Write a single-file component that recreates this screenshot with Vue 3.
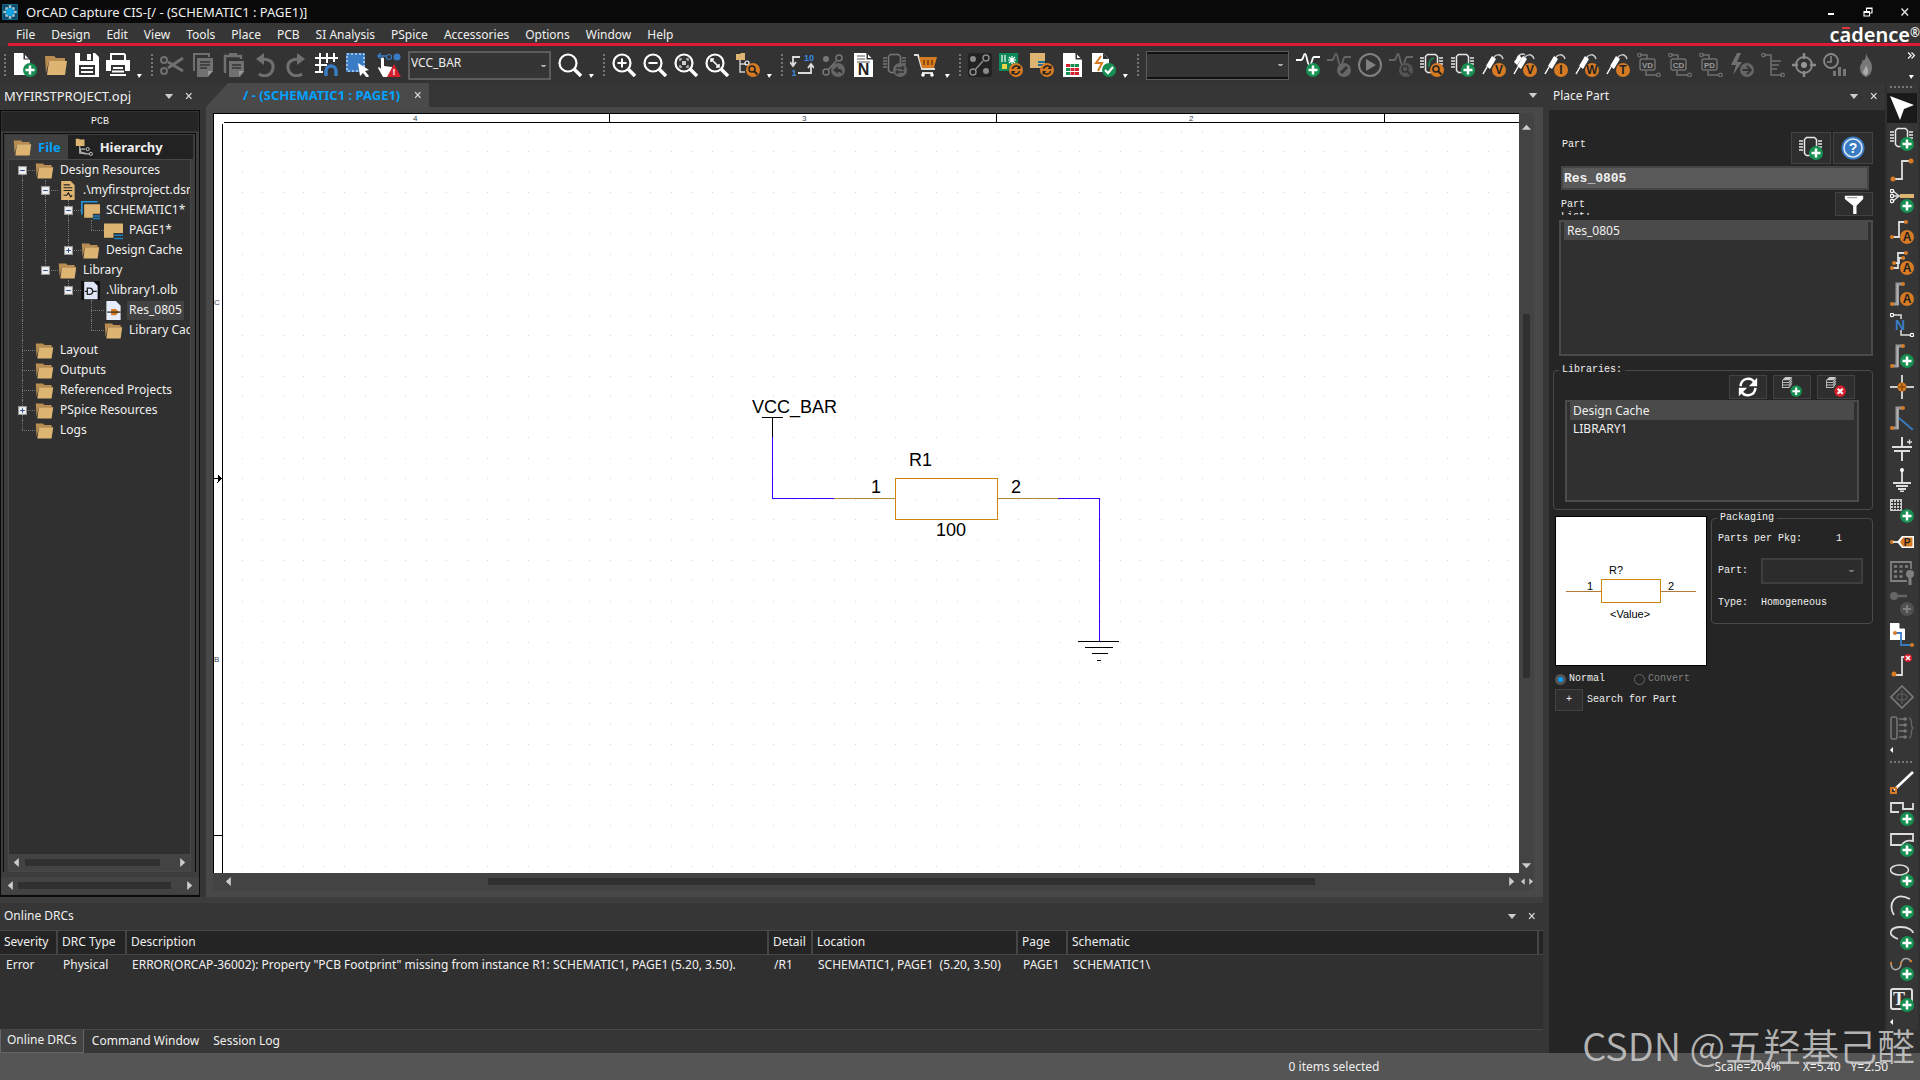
<template>
  <div class="app">
    <header class="title-bar">
      <Icon name="app" class="app-icon" />
      <h1>OrCAD Capture CIS-[/ - (SCHEMATIC1 : PAGE1)]</h1>
      <div class="window-buttons">
        <button aria-label="Minimize"><Icon name="minimize" /></button>
        <button aria-label="Restore"><Icon name="restore" /></button>
        <button aria-label="Close"><Icon name="close" /></button>
      </div>
    </header>

    <nav class="menu-bar">
      <button v-for="item in menus" :key="item">{{ item }}</button>
      <div class="brand">c<span class="macron">a</span>dence<small>®</small></div>
    </nav>

    <div class="toolbar">
      <div v-for="(group, i) in toolGroups" :key="i" class="tool-group">
        <span class="grip"></span>
        <template v-for="(tool, j) in group" :key="j">
          <select v-if="tool.select !== undefined" class="tool-select" :class="{ blank: !tool.select }" aria-label="Name">
            <option>{{ tool.select }}</option>
          </select>
          <span v-else-if="tool === '|'" class="more"></span>
          <button v-else class="tool" :aria-label="tool"><Icon :name="tool" /></button>
        </template>
      </div>
      <button class="overflow" aria-label="More tools">
        <Icon name="chevrons" />
        <span class="more"></span>
      </button>
    </div>

    <main class="main">
      <div class="workspace">
        <div class="upper">
          <aside class="project">
            <div class="dock-title">
              <span>MYFIRSTPROJECT.opj</span>
              <button aria-label="Panel menu"><Icon name="caret" /></button>
              <button aria-label="Close panel"><Icon name="close" /></button>
            </div>
            <div class="project-frame">
              <div class="project-type">PCB</div>
              <div class="project-inner">
                <div class="project-tabs">
                  <button class="active"><Icon name="folder" />File</button>
                  <button><Icon name="hierarchy" />Hierarchy</button>
                </div>
                <div class="tree-box">
                  <ul class="tree">
                    <li v-for="node in tree" :key="node.label" class="node">
                      <span v-for="(g, k) in node.guides" :key="k" class="guide" :class="guideClass[g]">
                        <button v-if="k === node.guides.length - 1 && node.toggle" class="toggle" :aria-label="'Toggle ' + node.label">
                          <Icon :name="node.toggle" />
                        </button>
                      </span>
                      <Icon :name="node.icon" class="node-icon" />
                      <span class="node-label" :class="{ selected: node.selected }">{{ node.label }}</span>
                    </li>
                  </ul>
                  <div class="scroll-x">
                    <Icon name="left" />
                    <div class="track"><div class="thumb" :style="{ marginLeft: '2%', width: '87%' }"></div></div>
                    <Icon name="right" />
                  </div>
                </div>
              </div>
              <div class="scroll-x outer">
                <Icon name="left" />
                <div class="track"><div class="thumb" :style="{ marginLeft: '1%', width: '91%' }"></div></div>
                <Icon name="right" />
              </div>
            </div>
          </aside>

          <section class="editor">
            <div class="editor-tabs">
              <button class="editor-tab">/ - (SCHEMATIC1 : PAGE1)<Icon name="close" /></button>
              <button class="tab-list" aria-label="Open pages"><Icon name="caret" /></button>
            </div>
            <div class="editor-frame">
              <div class="sheet">
                <svg class="drawing" width="100%" height="100%">
                  <path :d="gridDots" stroke="#b9e2f5" shape-rendering="crispEdges" />
                  <g stroke="#000" fill="none" shape-rendering="crispEdges">
                    <path d="M10 8.5H1400M8.5 10V900M395.5 0V8M782.5 0V8M1170.5 0V8M0 721.5H8M0 364.5H8" />
                    <path d="M4 361.5l4 3-4 3z" fill="#000" />
                  </g>
                  <g class="zone">
                    <text x="199" y="7">4</text>
                    <text x="588" y="7">3</text>
                    <text x="975" y="7">2</text>
                    <text x="0" y="191">C</text>
                    <text x="0" y="548">B</text>
                  </g>
                  <g fill="none" shape-rendering="crispEdges">
                    <path d="M548 303.5h21M558.5 303v20M864 527.5h41M871 533.5h28M878 539.5h16M883 546.5h4" stroke="#000" />
                    <path d="M558.5 323V384.5H620M844 384.5h41.500V527" stroke="#3c00ff" />
                    <path d="M620 384.500h61M783 384.500h61" stroke="#b08a35" />
                    <rect x="681.5" y="364.5" width="102" height="41" stroke="#cf850c" />
                  </g>
                  <g class="part-text">
                    <text x="538" y="299">VCC_BAR</text>
                    <text x="695" y="352">R1</text>
                    <text x="657" y="379">1</text>
                    <text x="797" y="379">2</text>
                    <text x="722" y="422">100</text>
                  </g>
                </svg>
              </div>
              <div class="scroll-y">
                <Icon name="up" />
                <div class="track"><div class="thumb" :style="{ marginTop: '181px', height: '50%' }"></div></div>
                <Icon name="down" />
              </div>
              <div class="scroll-x wide">
                <Icon name="left" />
                <div class="track"><div class="thumb" :style="{ marginLeft: '20%', width: '65%' }"></div></div>
                <Icon name="right" />
              </div>
              <div class="splitter"><Icon name="left" /><Icon name="right" /></div>
            </div>
          </section>
        </div>

        <section class="drc">
          <div class="dock-title">
            <span>Online DRCs</span>
            <button aria-label="Panel menu"><Icon name="caret" /></button>
            <button aria-label="Close panel"><Icon name="close" /></button>
          </div>
          <div class="drc-body">
            <table>
              <colgroup>
                <col v-for="(c, i) in columns" :key="i" :style="{ width: c.width }" />
              </colgroup>
              <thead>
                <tr>
                  <th v-for="(c, i) in columns" :key="i">{{ c.label }}</th>
                </tr>
              </thead>
              <tbody>
                <tr>
                  <td v-for="(cell, i) in drcRow" :key="i">{{ cell }}</td>
                </tr>
              </tbody>
            </table>
          </div>
          <div class="drc-tabs">
            <button class="active">Online DRCs</button>
            <button>Command Window</button>
            <button>Session Log</button>
          </div>
        </section>
      </div>

      <aside class="place-part">
        <div class="dock-title">
          <span>Place Part</span>
          <button aria-label="Panel menu"><Icon name="caret" /></button>
          <button aria-label="Close panel"><Icon name="close" /></button>
        </div>
        <div class="place-body">
          <div class="row part-head">
            <label for="part-name">Part</label>
            <button class="btn big" aria-label="Place part"><Icon name="partAdd" /></button>
            <button class="btn big" aria-label="Help"><Icon name="help" /></button>
          </div>
          <input id="part-name" v-model="partName" class="part-input" type="text" />
          <div class="row part-filter">
            <span class="clipped">Part List:</span>
            <button class="btn" aria-label="Filter"><Icon name="filter" /></button>
          </div>
          <ul class="list parts">
            <li class="selected">Res_0805</li>
          </ul>
          <fieldset class="libraries">
            <legend>Libraries:</legend>
            <div class="row lib-buttons">
              <button class="btn" aria-label="Refresh"><Icon name="refresh" /></button>
              <button class="btn" aria-label="Add library"><Icon name="libAdd" /></button>
              <button class="btn" aria-label="Remove library"><Icon name="libRemove" /></button>
            </div>
            <ul class="list libs">
              <li class="selected">Design Cache</li>
              <li>LIBRARY1</li>
            </ul>
          </fieldset>
          <div class="row preview-row">
            <svg class="preview" viewBox="0 0 150 148">
              <g fill="none" shape-rendering="crispEdges">
                <path d="M10 74.500h35M105 74.500h35" stroke="#b5793a" />
                <rect x="45.500" y="62.500" width="59" height="23" stroke="#cf850c" />
              </g>
              <text x="53" y="57">R?</text>
              <text x="31" y="73">1</text>
              <text x="112" y="73">2</text>
              <text x="54" y="101">&lt;Value&gt;</text>
            </svg>
            <fieldset class="packaging">
              <legend>Packaging</legend>
              <div class="pack-grid">
                <span>Parts per Pkg:</span><span class="pkg-count">1</span>
                <label for="pack-part">Part:</label>
                <select id="pack-part"><option></option></select>
                <span>Type:</span><span>Homogeneous</span>
              </div>
            </fieldset>
          </div>
          <div class="row radios">
            <label><input v-model="view" type="radio" name="view" value="normal" />Normal</label>
            <label class="off"><input v-model="view" type="radio" name="view" value="convert" disabled />Convert</label>
          </div>
          <div class="row search">
            <button id="search-toggle" class="btn small">+</button>
            <label for="search-toggle">Search for Part</label>
          </div>
        </div>
      </aside>

      <div class="side-tools">
        <div v-for="(group, i) in sideGroups" :key="i" class="side-group">
          <span class="grip-x"></span>
          <button v-for="name in group" :key="name" class="tool" :class="{ pressed: name === 'pointer' }" :aria-label="name">
            <Icon :name="name" />
          </button>
          <span class="more-left"></span>
        </div>
      </div>
    </main>

    <footer class="status-bar">
      <span class="selection">0 items selected</span>
      <span class="scale">Scale=204%</span>
      <span class="coord">X=5.40</span>
      <span class="coord">Y=2.50</span>
    </footer>
    <div class="watermark">CSDN @五羟基己醛</div>
  </div>
</template>

<script setup>
import { h, ref } from 'vue'

const partName = ref('Res_0805')
const view = ref('normal')

const menus = ['File', 'Design', 'Edit', 'View', 'Tools', 'Place', 'PCB', 'SI Analysis', 'PSpice', 'Accessories', 'Options', 'Window', 'Help']

// '|' is the drop-down mark at the end of a group
const toolGroups = [
  ['newFile', 'folderOpen', 'save', 'print', '|'],
  ['cut', 'copy', 'paste', 'undo', 'redo', 'grid', 'select', 'drag', { select: 'VCC_BAR' }, 'search', '|'],
  ['zoomIn', 'zoomOut', 'zoomArea', 'zoomFit', 'findTree', '|'],
  ['annotate', 'backAnnotate', 'netlist', 'crossRef', 'cart', '|'],
  ['board', 'syncBoard', 'syncPage', 'report', 'drcCheck', '|'],
  [{ select: '' }, 'simNew', 'simEdit', 'run', 'simView', 'partSearch', 'partAdd', 'probeV', 'probeVV', 'probeI', 'probeW', 'probeT',
    'biasVD', 'biasCD', 'biasPD', 'boltNext', 'netEdit', 'target', 'timing', 'flame']
]

const sideGroups = [
  ['pointer', 'partAdd', 'wire', 'netGroup', 'autoWire', 'autoMulti', 'autoBus', 'netAlias', 'busAdd', 'junction', 'busEntry', 'power', 'ground',
    'hierBlock', 'port', 'pinGrid', 'pinAdd', 'offPage', 'noConnect', 'diamond', 'busPins'],
  ['line', 'polyline', 'rectangle', 'ellipse', 'arc', 'ellipticArc', 'bezier', 'text']
]

const guideClass = { '|': 'v', T: 'v h', L: 'top h', F: 'bottom h', ' ': '' }

const tree = [
  { label: 'Design Resources', guides: 'F', toggle: 'minus', icon: 'folder' },
  { label: '.\\myfirstproject.dsn', guides: '|T', toggle: 'minus', icon: 'dsn' },
  { label: 'SCHEMATIC1*', guides: '||T', toggle: 'minus', icon: 'schematic' },
  { label: 'PAGE1*', guides: '|||L', icon: 'page' },
  { label: 'Design Cache', guides: '||L', toggle: 'plus', icon: 'folder' },
  { label: 'Library', guides: '|L', toggle: 'minus', icon: 'folder' },
  { label: '.\\library1.olb', guides: '| L', toggle: 'minus', icon: 'olb' },
  { label: 'Res_0805', guides: '|  T', icon: 'resPart', selected: true },
  { label: 'Library Cache', guides: '|  L', icon: 'folder' },
  { label: 'Layout', guides: 'T', icon: 'folder' },
  { label: 'Outputs', guides: 'T', icon: 'folder' },
  { label: 'Referenced Projects', guides: 'T', icon: 'folder' },
  { label: 'PSpice Resources', guides: 'T', toggle: 'plus', icon: 'folder' },
  { label: 'Logs', guides: 'L', icon: 'folder' }
].map(n => ({ ...n, guides: n.guides.split('') }))

const columns = [
  { label: 'Severity', width: '57px' },
  { label: 'DRC Type', width: '69px' },
  { label: 'Description', width: '642px' },
  { label: 'Detail', width: '44px' },
  { label: 'Location', width: '205px' },
  { label: 'Page', width: '50px' },
  { label: 'Schematic', width: 'auto' },
  { label: '', width: '5px' }
]
const drcRow = ['Error', 'Physical', 'ERROR(ORCAP-36002): Property "PCB Footprint" missing from instance R1: SCHEMATIC1, PAGE1 (5.20, 3.50).',
  '/R1', 'SCHEMATIC1, PAGE1  (5.20, 3.50)', 'PAGE1', 'SCHEMATIC1\\', '']

// grid points of the sheet, snapped to whole pixels
const pitch = 20.42
let gridDots = ''
for (let r = 0; r < 37; r++) {
  for (let c = 0; c < 63; c++) {
    gridDots += `M${Math.round(28 + c * pitch)} ${Math.round(17 + r * pitch)}.5h1`
  }
}

const GREEN = '#178f52'
const ORANGE = '#d67a24'
const BLUE = '#3a7cc4'
const TAN = '#deb473'
const GRAY = '#707070'
const RED = '#d3202c'

const line = (d, color = '#fff', w = 1.5) => `<path d="${d}" fill="none" stroke="${color}" stroke-width="${w}"/>`
const fill = (d, color = '#fff') => `<path d="${d}" fill="${color}"/>`
const dot = (x, y, r, color) => `<circle cx="${x}" cy="${y}" r="${r}" fill="${color}"/>`
const ring = (x, y, r, color = '#fff', w = 1.2) => `<circle cx="${x}" cy="${y}" r="${r}" fill="none" stroke="${color}" stroke-width="${w}"/>`
const badge = (color, inner = '') => dot(17, 17, 7, color) + inner
const plusBadge = badge(GREEN, line('M17 12.500v9M12.500 17h9', '#fff', 2.500))
const lens = (c, x = 16, y = 16) => ring(x, y, 3, c, 1.5) + line(`M${x + 2} ${y + 2}l3.500 3.500`, c, 2)
const letter = (t, x = 17, y = 21, size = 12, color = '#222') =>
  `<text x="${x}" y="${y}" text-anchor="middle" font-family="Liberation Sans, sans-serif" font-weight="700" font-size="${size}" fill="${color}">${t}</text>`
const sync = line('M13.500 16a3.700 3.700 0 0 1 7-1M20.500 18a3.700 3.700 0 0 1-7 1', '#222', 1.500) + fill('M21.500 12v4h-4zM12.500 22v-4h4z', '#222')

const chip = (c = '#e8e8e8') => line('M7.500 1.500h8l2 2v14l-2 2h-8l-2-2v-14z', c, 1.500) + line('M0 5h4M0 8h4M0 11h4M0 14h4M19 5h4M19 8h4M19 11h4', c, 1.500)
const glass = inner => ring(10, 10, 8.5, '#fff', 2.200) + line('M16 16l7 7', '#fff', 3.500) + inner
const sheet = (c = '#fff') => fill('M2 0h12l7 7v17H2z', c) + fill('M14.500 0v6.500H21z', '#333') + fill('M16 1.500v3.500h3.500z', c)
const probe = t => line('M11 6c2-5 8-6 10 0', '#ccc', 1.500) + fill('M10 3l4 3-6 10-4-3z') + line('M5 14l-4 7', '#fff', 1.500) + (t ? badge(ORANGE, letter(t)) : '')
const bias = t => line('M3 2h7v4M9 18v4h11', GRAY) + ring(2.500, 2, 1.800, GRAY) + ring(21.500, 22, 1.800, GRAY) +
  `<rect x="3" y="6" width="15" height="11" rx="2" fill="none" stroke="${GRAY}" stroke-width="1.500"/>` + letter(t, 10.5, 14.5, 8, '#999')
const busBody = line('M2 22h5V2h6', '#999', 3) + line('M8 3v20', '#ccc', 1) + dot(13, 2, 2, ORANGE) + dot(2, 22, 2, ORANGE)
const wave = c => line('M0 7h5c3 0 2-6 4-6s2 11 4.500 11S16 4 18 4h6', c, 1.800)
const folder = fill('M1 3h9l2 2h9v3H5L2 20z', '#b98d52') + fill('M5 8h18l-2 14H3z', TAN)
const nodes = c => dot(5, 6, 3, c) + ring(18, 5, 3, c, 1.500) + ring(5, 19, 3, c, 1.500) + dot(18, 18, 3, c) + line('M7 17l8-9', c)
const books = fill('M4 0h8l-3 4H0z', '#ccc') + line('M0 6.500h8.500l3.500-5M0 9.500h8.500l3.500-5M0 12.500h8.500l3.500-5M.500 4v9', '#bbb', 1.300)

const icons = {
  app: `<rect width="24" height="24" rx="2" fill="#0b4766"/>` + line('M1 1h22v22H1z', '#1b7fa8', 1) + fill('M5 5h4v4H5zM15 5h4v4h-4zM5 15h4v4H5zM15 15h4v4h-4zM10 2h4v4h-4zM10 18h4v4h-4zM2 10h4v4H2zM18 10h4v4h-4z', '#a9c4d0') + dot(12, 12, 6, '#12a5e0'),
  minimize: fill('M6 14h12v4H6z'),
  restore: line('M4 11h11v9H4zM4 13h11M9 10V4h11v10h-4M9 5h11', '#fff', 2.200),
  close: line('M5 5l13 14M18 5L5 19', '#ddd', 3),
  caret: fill('M2 7h20L12 19z', '#ccc'),
  left: fill('M17 2v20L6 12z', '#ccc'),
  right: fill('M7 2v20l11-10z', '#ccc'),
  up: fill('M2 17h20L12 6z', '#ccc'),
  down: fill('M2 7h20L12 18z', '#ccc'),
  chevrons: line('M3 4l8 8-8 8M12 4l8 8-8 8', '#fff', 3),
  minus: fill('M0 0h24v24H0z', '#999') + fill('M3 3h18v18H3z', '#f4f4f4') + line('M6 12h12', '#31508f', 3),
  plus: fill('M0 0h24v24H0z', '#999') + fill('M3 3h18v18H3z', '#f4f4f4') + line('M6 12h12M12 6v12', '#31508f', 3),
  folder,
  folderOpen: folder,
  hierarchy: fill('M1 1h4l1 1h6v8H1z', TAN) + line('M6 10v9h7M6 14h7', '#bbb') + ring(16, 14, 2, '#ccc') + ring(20, 20, 2, '#ccc') + line('M6 14c1 5 3 6 12 6', '#bbb'),
  dsn: fill('M4 0h12l5 5v19H4z', TAN) + line('M7 5h8M7 8.500h11M7 12h11M7 18h4l2-3 3 5 2-2', '#222', 1.500),
  schematic: line('M1 17V1h20', '#2394e0', 2) + fill('M4 4h20v12h-9v5H4z', TAN) + line('M15 19h9M15 22h9', '#1d7fc0', 2),
  page: fill('M0 3h24v12H12v6H0z', TAN) + line('M13 18h11M13 22h11', '#1d7fc0', 2),
  olb: fill('M0 0h24v24H0z', '#111') + fill('M4 1h12l5 5v17H4z', '#dfe6f7') + line('M8 9v8h3c5 0 5-8 0-8zM5 13h3M15 13h5', '#222', 1.600),
  resPart: fill('M3 0h12l6 6v18H3z', '#e6ecfb') + fill('M9 10h6l4 4-4 4H9z', ORANGE) + line('M4 14h17', '#222', 1.500),

  newFile: fill('M1 0h9l7 7v15H1z') + fill('M10.500 0v6.500H17z', '#333') + fill('M12 2v3.500h3.500z') + plusBadge,
  save: fill('M0 0h20l4 4v20H0z') + fill('M5 0h13v8H5zM4 12h16v10H4z', '#333') + fill('M12 1h4v6h-4z') + line('M6 15h12M6 19h12', '#fff', 2),
  print: line('M5 8V1h13l1 1v6', '#fff', 2) + fill('M0 7h24v11H0z') + fill('M5 12h14v11H5z', '#333') + line('M4 22h16M7 15h10M6 18.500h12', '#fff', 1.800),
  cut: line('M8 9l15 9M8 15l15-10', GRAY, 3) + ring(4, 7, 3, GRAY, 2) + ring(4, 18, 3, GRAY, 2),
  copy: line('M3 18V1h15v3', GRAY, 2) + fill('M6 5h16v13l-5 6H6z', GRAY) + line('M9 9h10M9 12h10M9 15h7', '#333', 1.300) + fill('M17 23v-5h5z', '#999'),
  paste: line('M3 20V3h16v3', GRAY, 2.500) + fill('M7 0h8v4H7z', GRAY) + fill('M7 8h15v11l-4 5H7z', GRAY) + line('M10 12h9M10 15h9', '#333', 1.300) + fill('M17 23v-5h5z', '#999'),
  undo: line('M6 21c6 4 13 1 14-6s-5-9-11-9', GRAY, 3) + fill('M11 0v12L3 6z', GRAY),
  redo: line('M18 21c-6 4-13 1-14-6s5-9 11-9', GRAY, 3) + fill('M13 0v12l8-6z', GRAY),
  grid: line('M5 0v20M12 0v10M19 0v9M0 5h23M0 12h12M0 19h8', '#fff', 2) + line('M11 23v-5a5 5 0 0 1 10 0v5', BLUE, 3.500),
  select: fill('M0 0h19v19H0z', BLUE) + `<rect x="1" y="1" width="17" height="17" fill="none" stroke="#fff" stroke-dasharray="2 2"/>` + fill('M12 10l11 7-4 1 4 5-2 2-4-5-3 3z'),
  drag: line('M1 3h9M4 0L1 3l3 3', BLUE, 1.500) + dot(20, 4, 3.500, BLUE) + ring(12, 4, 2.500, BLUE) + fill('M4 6c0-2 3-2 3 0v7l8 1v5l-3 5H6l-5-9c0-1 2-1 3 1z') + fill('M17 11l7 13H10z', RED) + letter('!', 17, 22, 9, '#fff'),
  search: glass(''),
  zoomIn: glass(line('M10 5.500v9M5.500 10h9', '#fff', 2)),
  zoomOut: glass(line('M5.500 10h9', '#fff', 2)),
  zoomArea: glass(line('M6 8V6h2M12 6h2v2M14 12v2h-2M8 14H6v-2', '#bbb', 1.500) + fill('M8 8h4v4H8z', '#ccc')),
  zoomFit: glass(line('M6.500 6.500l7 7M6 9V6h3M14 11v3h-3', '#fff', 1.500)),
  findTree: fill('M0 1h4l1-1h4v7H0z', TAN) + line('M4 7v12h5M4 11h5', '#ccc') + ring(11, 10, 2) + badge(ORANGE, lens('#222')),
  annotate: line('M10 4H3v8M0 9l3 4 3-4M8 20h13v-8M18 15l3-4 3 4', '#ddd', 1.800) + letter('10', 19, 8, 9, '#3a8ae0') + letter('1', 4, 23, 9, '#3a8ae0'),
  backAnnotate: nodes('#777') + badge('#666', fill('M12 17l5-4v3c4 0 5 2 4 5-1-2-2-2-4-2v2z', '#333')),
  netlist: sheet() + line('M5 3h8M5 6h8M5 9h13', '#555', 1) + letter('N', 11.500, 22, 16, '#222'),
  crossRef: chip('#777') + badge('#666', line('M13 15h8M19 13l2 2-2 2M21 19h-8M15 17l-2 2 2 2', '#333', 1.300)),
  cart: line('M0 2h4l4 14h13M8 20h11', '#ddd', 1.800) + fill('M5 4h18l-3 11H8z', ORANGE) + line('M10 7v5M14 7v5M18 7v5', '#7a3b00', 1.500) + dot(9, 22, 1.800, '#fff') + dot(18, 22, 1.800, '#fff'),
  board: `<rect width="24" height="24" rx="3" fill="#222"/>` + nodes('#8a8a8a'),
  syncBoard: fill('M0 0h19v18H0z', '#0c8a5a') + line('M3 2v7M6 2v7', '#fff', 1.200) + line('M13 3v8M9 7h8M10 4l6 6M16 4l-6 6', '#fff', 1.200) + fill('M3 11h5v5H3z', '#e8d44a') + badge(ORANGE, sync),
  syncPage: fill('M0 0h15v15H0z', TAN) + line('M8 9h7M8 12h6', '#1d6f9a', 2) + badge(ORANGE, sync),
  report: sheet() + fill('M5 11h4v3H5zM14 15h4v3h-4zM9.500 19h4v3h-4z', RED) + fill('M9.500 11h4v3h-4zM14 11h4v3h-4zM5 15h4v3H5zM5 19h4v3H5z', GREEN) + fill('M14 19h4v3h-4zM9.500 15h4v3h-4z', RED),
  drcCheck: fill('M0 0h11l6 6v13H0z') + fill('M11 0v6h6z', '#333') + line('M9 3l-5 7h6l-4 8', ORANGE, 2) + badge(GREEN, line('M13 17l3 3 5-6', '#fff', 2.200)),
  simNew: wave('#fff') + plusBadge,
  simEdit: wave('#666') + badge('#666', line('M14 20l6-6', '#333', 3)),
  run: ring(12, 12, 11, '#808080', 2) + fill('M8 6l10 6-10 6z', '#808080'),
  simView: wave('#666') + badge('#555', lens('#333')),
  partSearch: chip() + line('M9 14c0-6 1-8 5-9', GREEN, 1.500) + badge(ORANGE, lens('#222')),
  partAdd: chip() + plusBadge,
  probeV: probe('V'),
  probeVV: line('M4 5c2-4 6-5 8-3', '#ccc') + fill('M6 2l3 3-5 7-3-3z') + probe('V'),
  probeI: probe('I'),
  probeW: probe('W'),
  probeT: probe('T'),
  biasVD: bias('VD'),
  biasCD: bias('CD'),
  biasPD: bias('PD'),
  boltNext: fill('M7 0L1 12h5L3 22l9-13H7l4-9z', GRAY) + badge('#666', line('M12.500 17h8M17 13l4 4-4 4', '#333', 1.800)),
  netEdit: line('M3 2h7v20h11M10 8h10M10 12h8M10 16h6', GRAY) + ring(2.500, 2, 1.800, GRAY) + ring(21.500, 22, 1.800, GRAY),
  target: ring(12, 12, 8, '#8a8a8a', 2) + dot(12, 12, 3, '#999') + line('M12 0v6M12 18v6M0 12h6M18 12h6', '#8a8a8a', 2.500),
  timing: ring(8, 8, 7, '#888', 1.800) + line('M8 3v6H4', '#888', 1.500) + fill('M10 18h3v5h-3zM15 14h3v9h-3zM20 16h3v7h-3z', '#777'),
  flame: fill('M12 0c1 5 6 8 6 14 0 6-3 9-6 10-3-1-6-4-6-9 0-4 3-5 2-8 3 2 4-3 4-7z', '#777') + fill('M12 12c1 3 3 4 2 8l-2 3-3-3c0-3 2-4 3-8z', '#aaa'),

  pointer: fill('M0 0l24 9-10 4-4 11z'),
  wire: line('M3 21h9V3h8', '#ddd', 1.800) + dot(21, 3, 2.500, ORANGE) + dot(3, 21, 2.500, ORANGE),
  netGroup: line('M3 2l6 5-6 5M3 7h7', '#ddd') + ring(2, 2, 1.700) + ring(2, 7, 1.700) + ring(2, 12, 1.700) + fill('M10 5h14v4H10z', TAN) + plusBadge,
  autoWire: line('M2 17h7V2h6', '#ddd', 1.800) + dot(16, 2, 2, ORANGE) + dot(2, 17, 2, ORANGE) + badge(ORANGE, letter('A')),
  autoMulti: line('M2 17h6V2h7M4 12h5V7h6', '#ddd', 1.800) + dot(16, 2, 2, ORANGE) + dot(13, 7, 2, ORANGE) + dot(4, 12, 2, ORANGE) + dot(2, 17, 2, ORANGE) + badge(ORANGE, letter('A')),
  autoBus: busBody + badge(ORANGE, letter('A')),
  netAlias: line('M3 2h8v4M11 17v5h9', '#ddd') + ring(2, 2, 1.700) + ring(22, 22, 1.700) + letter('N', 10, 17, 14, BLUE),
  busAdd: busBody + plusBadge,
  junction: line('M12 0v24M0 12h24', '#ccc', 2) + dot(12, 12, 4.500, ORANGE) + line('M12 8v8M8 12h8', '#8a4a08', 1.300),
  busEntry: busBody + line('M9 12l14 12', BLUE, 1.800),
  power: line('M12 0v9M2 10h20M4 14h16M12 14v10', '#ddd', 2) + line('M17 5h5M19.500 2.500v5', '#ddd', 1.300),
  ground: line('M12 2v12M3 15h18M6 18h12M8 21h8M10 23.500h4', '#ddd', 1.800) + dot(12, 2, 2, '#fff'),
  hierBlock: fill('M0 0h12v12H0z', '#ccc') + line('M3.500 1v10M6.500 1v10M9.500 1v10M1 3.500h10M1 6.500h10M1 9.500h10', '#333', 1) + plusBadge,
  port: dot(2, 12, 2, ORANGE) + line('M3 12h6', '#eee', 1.800) + fill('M7 12l5-6h12v12H12z') + fill('M10 12l3-4.500h9.500v9H13z', ORANGE) + letter('P', 17, 16, 10),
  pinGrid: line('M17 20H1V1h20v7', '#808080', 1.800) + line('M4 5.500h14M4 10.500h9M4 15.500h9', '#808080', 2.500).replace('/>', ' stroke-dasharray="3 2.500"/>') + dot(20, 13, 4, '#808080') + line('M20 15v9', '#808080', 3),
  pinAdd: dot(4, 4, 4, '#666') + line('M6 4h11', '#666', 2.500) + badge('#505050', line('M17 13v8M13 17h8', '#808080', 2)),
  offPage: fill('M0 0h9l6 6v11H0z') + fill('M9.500 0v5.500H15z', '#333') + line('M5 10h6v12h12', BLUE, 1.800) + dot(5, 10, 2, ORANGE) + dot(22, 22, 2, ORANGE),
  noConnect: line('M4 21h8V3h4', '#ddd', 1.800) + dot(4, 20, 2.500, ORANGE) + dot(18, 4, 4, RED) + line('M16 2l4 4M20 2l-4 4', '#fff', 1.500),
  diamond: line('M12 1l11 11-11 11L1 12z', '#7a7a7a', 1.600) + line('M12 5v14M7 12c0-4 10-4 10 0s-10 4-10 0', '#555', 1.500),
  busPins: `<rect x="1" y="1" width="6" height="22" rx="2" fill="none" stroke="#777" stroke-width="1.500"/>` + line('M9 3h8M9 9h8M9 15h8M9 21h8', '#777') + dot(15, 3, 1.800, '#777') + dot(15, 9, 1.800, '#777') + dot(15, 15, 1.800, '#777') + dot(15, 21, 1.800, '#777') + line('M19 2c4 0 1 9 4 10-3 1 0 10-4 10', '#666', 1.300),
  line: line('M4 19L23 1', '#fff', 2.500) + line('M1 17h5v5H1z', ORANGE, 2),
  polyline: line('M9 10H1V1h12v6h10V1', '#ddd', 1.800) + plusBadge,
  rectangle: line('M1 12V1h22v7c-6-1-9 0-11 4z', '#ddd', 1.800) + plusBadge,
  ellipse: `<ellipse cx="9.500" cy="6" rx="9" ry="5" fill="none" stroke="#ddd" stroke-width="1.600"/>` + plusBadge,
  arc: line('M4 20C-3 9 5-4 20 4', '#ddd', 1.800) + plusBadge,
  ellipticArc: line('M8 13C-4 9 0 1 11 1c8 0 12 4 12 6', '#ddd', 1.800) + plusBadge,
  bezier: line('M1 7c1 8 9 7 10 0s8-7 10-2', '#aaa', 1.600) + dot(1, 6, 1.200, ORANGE) + dot(11, 6, 1.200, ORANGE) + dot(21, 4, 1.200, ORANGE) + plusBadge,
  text: `<rect x="1" y="1" width="21" height="20" rx="2" fill="none" stroke="#ddd" stroke-width="2"/><text x="9" y="17" text-anchor="middle" font-family="Liberation Serif, serif" font-weight="700" font-size="18" fill="#eee">T</text>` + plusBadge,

  help: dot(12, 12, 11.500, BLUE) + ring(12, 12, 9, '#dce8f5', 1.500) + letter('?', 12, 17, 14, '#fff'),
  filter: fill('M1 2h22v4l-8 8v10h-4V14L1 6z') + fill('M4 4h12v1H4z', '#777'),
  refresh: line('M3 11C4 1 16-1 20 7M21 13c-1 10-13 12-17 4', '#fff', 3) + fill('M23 1v10H13zM1 23V13h10z'),
  libAdd: books + plusBadge,
  libRemove: books + badge(RED, line('M14 14l6 6M20 14l-6 6', '#fff', 2.500))
}

const Icon = (props) => h('svg', { class: 'icon', viewBox: '0 0 24 24', 'aria-hidden': 'true', innerHTML: icons[props.name] })
Icon.props = ['name']
</script>

<style>
body {
  margin: 0;
  background: #363636;
}
</style>

<style scoped>
.app {
  position: relative;
  display: flex;
  flex-direction: column;
  min-height: 100vh;
  background: #363636;
  color: #f0f0f0;
  font: 12px/16px "Noto Sans", "Noto Sans CJK SC", sans-serif;
}

.app * {
  box-sizing: border-box;
}

button {
  padding: 0;
  border: 0;
  background: none;
  color: inherit;
  font: inherit;
}

ul {
  margin: 0;
  padding: 0;
  list-style: none;
}

.icon {
  display: block;
  flex-shrink: 0;
  width: 24px;
  height: 24px;
}

/* title and menu */
.title-bar {
  display: flex;
  align-items: center;
  height: 23px;
  padding: 0 9px 0 2px;
  background: #090909;
}

.app-icon {
  width: 16px;
  height: 16px;
  margin-right: 8px;
}

h1 {
  margin: 0;
  font-size: 13px;
  font-weight: 400;
}

.window-buttons {
  display: flex;
  gap: 25px;
  margin-left: auto;
}

.window-buttons .icon {
  width: 12px;
  height: 12px;
}

.menu-bar {
  display: flex;
  align-items: center;
  gap: 16px;
  height: 23px;
  margin-left: 8px;
  padding: 3px 0 0 8px;
  border-bottom: 3px solid #e11836;
}

.brand {
  margin-left: auto;
  color: #fff;
  font-size: 20px;
  font-weight: 600;
  line-height: 16px;
}

.brand small {
  font-size: 12px;
  vertical-align: 5px;
  line-height: 10px;
}

.macron {
  position: relative;
}

.macron::before {
  content: "";
  position: absolute;
  top: 6px;
  left: 2px;
  width: 8px;
  height: 2px;
  background: #e0353c;
}

/* top toolbar */
.toolbar {
  display: flex;
  height: 37px;
  background: #333;
}

.tool-group {
  display: flex;
  align-items: center;
  gap: 7px;
  margin: 1px 0 0 4px;
  padding-right: 5px;
}

.grip {
  width: 2px;
  height: 22px;
  background: repeating-linear-gradient(#777 0 2px, transparent 2px 4px);
}

.more {
  align-self: flex-end;
  margin-bottom: 5px;
  border: solid transparent;
  border-width: 4px 3px 0 2px;
  border-top-color: #fff;
}

.tool-select {
  width: 143px;
  height: 29px;
  padding: 0 0 4px 1px;
  border: 2px solid #5c5c5c;
  appearance: none;
  background: linear-gradient(#aaa, #aaa) 131px 12px / 5px 1px no-repeat, linear-gradient(#aaa, #aaa) 132px 13px / 3px 1px no-repeat, #353535;
  color: #eee;
  font: inherit;
}

.tool-select.blank {
  border-width: 1px;
  box-shadow: inset 0 2px #111, inset 0 -2px #111;
}

.overflow {
  display: flex;
  flex-direction: column;
  align-items: center;
  margin: 4px 4px 0 auto;
}

.overflow .icon {
  width: 9px;
  height: 11px;
}

.overflow .more {
  align-self: center;
  margin-top: 14px;
}

.main {
  display: flex;
  flex: 1;
}

.workspace {
  display: flex;
  flex: 1;
  flex-direction: column;
  min-width: 0;
  background: #3d3d3d;
}

.upper {
  display: flex;
  flex: 1;
  gap: 6px;
  background: #363636;
}

.dock-title {
  display: flex;
  align-items: center;
  gap: 10px;
  height: 27px;
  padding: 0 6px 2px 4px;
  background: #363636;
}

.dock-title span {
  flex: 1;
}

.dock-title .icon,
.tab-list .icon,
.editor-tab .icon {
  width: 10px;
  height: 10px;
}

/* project tree */
.project {
  display: flex;
  flex-direction: column;
  width: 200px;
}

.project .dock-title {
  font-size: 13px;
}

.project-frame {
  display: flex;
  flex: 1;
  flex-direction: column;
  border: 1px solid #0c0c0c;
  border-width: 1px 1px 2px;
  background: #3d3d3d;
}

.project-type {
  height: 21px;
  border: 1px solid #333;
  background: #252525;
  font: 10px/20px "Liberation Mono", monospace;
  text-align: center;
}

.project-inner {
  display: flex;
  flex: 1;
  flex-direction: column;
  margin: 1px 3px 5px 2px;
  padding: 1px 2px 0;
  border: 1px solid #0c0c0c;
  border-bottom: 0;
  background: #3d3d3d;
}

.project-tabs {
  display: flex;
  height: 24px;
  background: #222;
}

.project-tabs button {
  display: flex;
  align-items: center;
  gap: 6px;
  padding: 0 7px;
  font-size: 13px;
  font-weight: 700;
}

.project-tabs .active {
  background: #414141;
  color: #00a2ff;
}

.project-tabs .icon,
.node-icon {
  width: 19px;
  height: 19px;
}

.tree-box {
  display: flex;
  flex: 1;
  flex-direction: column;
  margin: 0 2px;
  border: 1px solid #484848;
  background: #303030;
}

.tree {
  flex: 1;
  overflow: hidden;
}

.node {
  display: flex;
  align-items: center;
  height: 20px;
  padding-left: 2px;
  white-space: nowrap;
}

.guide {
  position: relative;
  flex-shrink: 0;
  width: 23px;
  height: 20px;
}

.guide.v::before,
.guide.top::before,
.guide.bottom::before {
  content: "";
  position: absolute;
  top: 0;
  left: 11px;
  height: 20px;
  border-left: 1px dotted #777;
}

.guide.top::before {
  height: 10px;
}

.guide.bottom::before {
  top: 10px;
  height: 10px;
}

.guide.h::after {
  content: "";
  position: absolute;
  top: 10px;
  left: 11px;
  width: 13px;
  border-top: 1px dotted #777;
}

.toggle {
  position: absolute;
  z-index: 1;
  top: 6px;
  left: 7px;
}

.toggle .icon {
  width: 9px;
  height: 9px;
}

.node-icon {
  margin: 0 4px 0 1px;
}

.node-label {
  padding: 1px 2px 2px;
}

.node-label.selected {
  background: #424242;
}

/* scroll bars */
.scroll-x {
  display: flex;
  align-items: center;
  height: 17px;
  padding: 0 2px;
  background: #434343;
}

.scroll-x.outer {
  margin-bottom: 1px;
  padding: 0 4px;
}

.scroll-x .icon,
.scroll-y .icon {
  width: 11px;
  height: 11px;
}

.track {
  flex: 1;
}

.scroll-x .thumb {
  height: 7px;
  background: #303030;
}

.scroll-y {
  display: flex;
  flex-direction: column;
  align-items: center;
  padding: 9px 0 2px;
  background: #434343;
}

.scroll-y .thumb {
  width: 7px;
  background: #303030;
}

/* drawing area */
.editor {
  display: flex;
  flex: 1;
  flex-direction: column;
  min-width: 0;
}

.editor-tabs {
  display: flex;
  align-items: center;
  justify-content: space-between;
  height: 24px;
  padding-right: 5px;
}

.editor-tab {
  display: flex;
  align-items: center;
  gap: 13px;
  height: 24px;
  padding: 0 6px 0 37px;
  background: #4a4a4a;
  clip-path: polygon(22px 0, 100% 0, 100% 100%, 0 100%);
  color: #00a2ff;
  font-size: 13px;
  font-weight: 700;
}

.editor-frame {
  display: grid;
  flex: 1;
  grid-template-rows: 1fr 17px;
  grid-template-columns: 1fr 15px;
  padding: 6px 9px 7px 7px;
  background: #484848;
}

.sheet {
  position: relative;
  min-height: 400px;
  border: solid #000;
  border-width: 1px 0 0 1px;
  background: #fff;
}

/* the drawing must not push the sheet larger */
.drawing {
  position: absolute;
  inset: 0;
}

.zone {
  fill: #345;
  font: 8px "Liberation Sans", sans-serif;
}

.part-text {
  fill: #000;
  font: 18px "Liberation Sans", sans-serif;
}

.scroll-x.wide {
  padding-left: 10px;
}

.splitter {
  display: flex;
  align-items: center;
  justify-content: center;
  background: #434343;
}

.splitter .icon {
  width: 8px;
  height: 11px;
}

/* DRC table */
.drc {
  margin-top: 6px;
}

.drc-body {
  height: 100px;
  border: solid #484848;
  border-width: 1px 0;
  background: #303030;
}

table {
  width: 100%;
  border-collapse: collapse;
  table-layout: fixed;
}

th,
td {
  overflow: hidden;
  padding: 0;
  font-weight: 400;
  text-align: left;
  white-space: pre;
}

th {
  height: 23px;
  padding: 0 0 0 4px;
  border-right: 2px solid #454545;
  border-bottom: 1px solid #454545;
  background: #242424;
}

th:last-child {
  border-right: 0;
}

td {
  height: 22px;
  padding-left: 6px;
}

.drc-tabs {
  display: flex;
  gap: 2px;
  height: 23px;
  background: #363636;
}

.drc-tabs button {
  padding: 0 6px 2px;
}

.drc-tabs .active {
  border: 1px solid #666;
  border-top: 0;
  background: #424242;
}

/* place part */
.place-part {
  display: flex;
  flex-direction: column;
  width: 342px;
  padding-left: 6px;
  font-family: "Liberation Mono", monospace;
  font-size: 10px;
}

.place-part .dock-title {
  font: 12px/16px "Noto Sans", sans-serif;
}

.place-body {
  display: flex;
  flex: 1;
  flex-direction: column;
  padding: 22px 12px 0 4px;
  background: #252525;
}

.row {
  display: flex;
}

.btn {
  display: flex;
  align-items: center;
  justify-content: center;
  width: 38px;
  height: 24px;
  border: 1px solid #424242;
  background: #2e2e2e;
}

.btn .icon {
  width: 20px;
  height: 20px;
}

.btn.big {
  width: 40px;
  height: 32px;
}

.btn.big .icon {
  width: 24px;
  height: 24px;
}

.part-head {
  gap: 2px;
  padding-left: 9px;
}

.part-head label {
  flex: 1;
  padding-top: 5px;
}

.part-input {
  height: 24px;
  margin: 2px 4px 2px 8px;
  padding: 0 1px;
  border: 2px solid #454545;
  background: #595959;
  color: #f2f2f2;
  font: 700 13px "Liberation Mono", monospace;
}

.part-filter {
  justify-content: space-between;
  padding-left: 8px;
}

.clipped {
  overflow: hidden;
  width: 40px;
  height: 23px;
  padding-top: 7px;
  line-height: 12px;
}

.list {
  border: 2px solid #4a4a4a;
  background: #303030;
  font: 12px/17px "Noto Sans", sans-serif;
}

.list li {
  height: 18px;
  margin: 0 3px;
  padding-left: 3px;
}

.list .selected {
  background: #4a4a4a;
}

.parts {
  height: 136px;
  margin: 4px 0 9px 6px;
}

fieldset {
  min-width: 0;
  margin: 0;
  padding: 0;
  border: 1px solid #4a4a4a;
  border-radius: 4px;
}

legend {
  margin-left: 5px;
  padding: 0 3px;
  line-height: 10px;
}

.lib-buttons {
  gap: 6px;
  justify-content: flex-end;
  padding-right: 17px;
}

.libs {
  height: 102px;
  margin: 1px 13px 7px 11px;
}

.preview-row {
  gap: 4px;
  align-items: flex-start;
  padding: 3px 0 1px 2px;
}

.preview {
  width: 152px;
  height: 150px;
  margin-top: 3px;
  border: 1px solid #000;
  background: #fff;
  font: 11px "Liberation Sans", sans-serif;
}

.packaging {
  flex: 1;
}

.pack-grid {
  display: grid;
  grid-template-rows: 28px 36px 28px;
  grid-template-columns: 43px 1fr;
  align-items: center;
  padding: 2px 9px 6px 6px;
}

.pack-grid > :first-child {
  width: 90px;
}

.pkg-count {
  padding-left: 75px;
}

.pack-grid select {
  height: 26px;
  border: 2px solid #3e3e3e;
  appearance: none;
  background: linear-gradient(#777, #777) 86px 10px / 5px 1px no-repeat, linear-gradient(#777, #777) 87px 11px / 3px 1px no-repeat, #2c2c2c;
}

.radios {
  gap: 29px;
  margin: 4px 0 2px 2px;
}

.radios label {
  display: flex;
  gap: 3px;
  align-items: center;
  height: 16px;
}

.radios input {
  width: 11px;
  height: 11px;
  margin: 0;
  border: 3px solid #555;
  border-radius: 50%;
  appearance: none;
  background: #252525;
}

.radios input:checked {
  background: #00a2ff;
}

.radios input:disabled {
  border: 1px solid #666;
}

.off {
  color: #808080;
}

.search {
  gap: 4px;
  align-items: center;
  padding-left: 2px;
}

.btn.small {
  width: 28px;
  height: 22px;
}

/* right tool column */
.side-tools {
  width: 35px;
  padding-left: 2px;
  background: #303030;
}

.side-group {
  display: flex;
  flex-direction: column;
  gap: 7px;
  align-items: flex-start;
  width: 31px;
  padding: 3px 0 5px 3px;
  background: #363636;
}

.grip-x {
  width: 22px;
  height: 2px;
  margin-bottom: 1px;
  background: repeating-linear-gradient(90deg, #777 0 2px, transparent 2px 4px);
}

.pressed {
  outline: 3px solid #1a1a1a;
  background: #1a1a1a;
}

.more-left {
  border: solid transparent;
  border-width: 3px 3px 3px 0;
  border-right-color: #fff;
}

/* status */
.status-bar {
  display: flex;
  align-items: center;
  height: 27px;
  padding-right: 32px;
  background: #555;
}

.selection {
  margin-left: auto;
  margin-right: 335px;
}

.scale {
  margin-right: 22px;
}

.coord + .coord {
  margin-left: 10px;
}

.watermark {
  position: absolute;
  right: 5px;
  bottom: 9px;
  color: rgba(205, 205, 205, 0.85);
  font: 350 38px/52px "Noto Sans CJK SC", sans-serif;
  pointer-events: none;
}
</style>
